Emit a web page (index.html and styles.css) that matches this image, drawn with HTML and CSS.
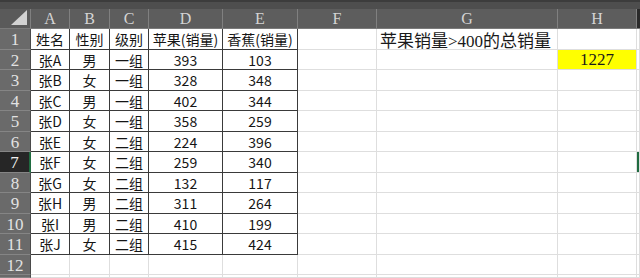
FILE: index.html
```html
<!DOCTYPE html>
<html>
<head>
<meta charset="utf-8">
<link rel="stylesheet" href="styles.css">
</head>
<body>
<div class="strip"></div>
<div class="sheet">
  <div class="ch corner"><span class="tri"></span></div>
  <div class="ch">A</div><div class="ch">B</div><div class="ch">C</div><div class="ch">D</div><div class="ch">E</div><div class="ch">F</div><div class="ch">G</div><div class="ch">H</div><div class="ch sel-col"></div>

  <div class="rh">1</div>
  <div class="c t">姓名</div><div class="c t">性别</div><div class="c t">级别</div><div class="c t">苹果(销量)</div><div class="c t">香蕉(销量)</div>
  <div class="c"></div><div class="c left big">苹果销量&gt;400的总销量</div><div class="c"></div><div class="c"></div>

  <div class="rh">2</div>
  <div class="c t">张A</div><div class="c t">男</div><div class="c t">一组</div><div class="c t">393</div><div class="c t">103</div>
  <div class="c"></div><div class="c"></div><div class="c yellow">1227</div><div class="c"></div>

  <div class="rh">3</div>
  <div class="c t">张B</div><div class="c t">女</div><div class="c t">一组</div><div class="c t">328</div><div class="c t">348</div>
  <div class="c"></div><div class="c"></div><div class="c"></div><div class="c"></div>

  <div class="rh">4</div>
  <div class="c t">张C</div><div class="c t">男</div><div class="c t">一组</div><div class="c t">402</div><div class="c t">344</div>
  <div class="c"></div><div class="c"></div><div class="c"></div><div class="c"></div>

  <div class="rh">5</div>
  <div class="c t">张D</div><div class="c t">女</div><div class="c t">一组</div><div class="c t">358</div><div class="c t">259</div>
  <div class="c"></div><div class="c"></div><div class="c"></div><div class="c"></div>

  <div class="rh">6</div>
  <div class="c t">张E</div><div class="c t">女</div><div class="c t">二组</div><div class="c t">224</div><div class="c t">396</div>
  <div class="c"></div><div class="c"></div><div class="c"></div><div class="c"></div>

  <div class="rh sel-row">7</div>
  <div class="c t">张F</div><div class="c t">女</div><div class="c t">二组</div><div class="c t">259</div><div class="c t">340</div>
  <div class="c"></div><div class="c"></div><div class="c"></div><div class="c active"></div>

  <div class="rh">8</div>
  <div class="c t">张G</div><div class="c t">女</div><div class="c t">二组</div><div class="c t">132</div><div class="c t">117</div>
  <div class="c"></div><div class="c"></div><div class="c"></div><div class="c"></div>

  <div class="rh">9</div>
  <div class="c t">张H</div><div class="c t">男</div><div class="c t">二组</div><div class="c t">311</div><div class="c t">264</div>
  <div class="c"></div><div class="c"></div><div class="c"></div><div class="c"></div>

  <div class="rh">10</div>
  <div class="c t">张I</div><div class="c t">男</div><div class="c t">二组</div><div class="c t">410</div><div class="c t">199</div>
  <div class="c"></div><div class="c"></div><div class="c"></div><div class="c"></div>

  <div class="rh">11</div>
  <div class="c t">张J</div><div class="c t">女</div><div class="c t">二组</div><div class="c t">415</div><div class="c t">424</div>
  <div class="c"></div><div class="c"></div><div class="c"></div><div class="c"></div>

  <div class="rh">12</div>
  <div class="c"></div><div class="c"></div><div class="c"></div><div class="c"></div><div class="c"></div>
  <div class="c"></div><div class="c"></div><div class="c"></div><div class="c"></div>

  <div class="rh"></div>
  <div class="c"></div><div class="c"></div><div class="c"></div><div class="c"></div><div class="c"></div>
  <div class="c"></div><div class="c"></div><div class="c"></div><div class="c"></div>
</div>
</body>
</html>
```

FILE: styles.css
```css
html, body {
  margin: 0;
  padding: 0;
}

body {
  width: 640px;
  height: 278px;
  overflow: hidden;
  background: #ffffff;
}

.strip {
  height: 9px;
  box-sizing: border-box;
  background: #4e4e4e;
  border-top: 2px solid #3c3c3c;
}

.sheet {
  display: grid;
  grid-template-columns: 31px 39px 40px 39px 74px 75px 79px 181px 79px 3px;
  grid-template-rows: 20px 21px 20px 21px 20px 21px 20px 21px 20px 21px 20px 21px 20px 3px;
  overflow: hidden;
}

.ch {
  box-sizing: border-box;
  background: #5d5d5d;
  color: #d4d4d4;
  font: 16px "Liberation Serif", serif;
  border-right: 1px solid #808080;
  border-bottom: 1px solid #7a7a7a;
  display: flex;
  align-items: center;
  justify-content: center;
  overflow: hidden;
}

.corner {
  position: relative;
  background: #5a5a5a;
}

.tri {
  position: absolute;
  right: 3px;
  bottom: 3px;
  width: 0;
  height: 0;
  border-left: 16px solid transparent;
  border-bottom: 15px solid #d2d2d2;
}

.sel-col {
  background: #2a2a2a;
  border-right: none;
}

.rh {
  box-sizing: border-box;
  background: #6a6a6a;
  color: #e2e2e2;
  font: 17px "Liberation Serif", serif;
  border-right: 1px solid #4a4a4a;
  border-bottom: 1px solid #858585;
  display: flex;
  align-items: center;
  justify-content: center;
  padding-top: 2px;
  overflow: hidden;
}

.sel-row {
  background: #262626;
  color: #f0f0f0;
  border-right: 2px solid #1f6b40;
}

.c {
  box-sizing: border-box;
  border-right: 1px solid #dedede;
  border-bottom: 1px solid #dedede;
  display: flex;
  align-items: center;
  justify-content: center;
  font: 14px "Noto Sans CJK SC", sans-serif;
  color: #151515;
  white-space: nowrap;
  overflow: visible;
}

.t {
  border-right-color: #3a3a3a;
  border-bottom-color: #3a3a3a;
}

.left {
  justify-content: flex-start;
  padding-left: 3px;
}

.big {
  font: 17px "Liberation Serif", "Noto Sans CJK SC", serif;
  color: #1a1a1a;
}

.yellow {
  background: #ffff00;
  font: 17px "Liberation Serif", serif;
  color: #1a1a1a;
}

.active {
  box-shadow: inset 2px 2px 0 #1f6b40, inset 0 -2px 0 #1f6b40;
  background: #f4f4f4;
}
```
